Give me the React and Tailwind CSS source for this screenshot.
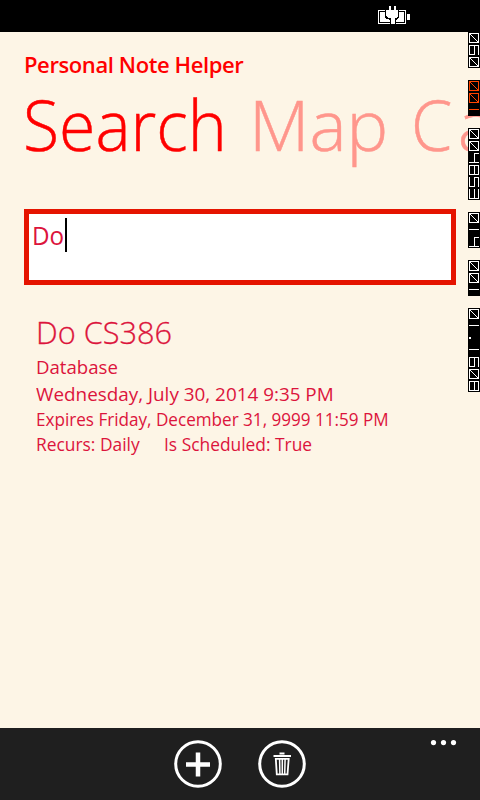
const OPEN = "font-['Open_Sans','Noto_Sans',sans-serif]";

// Seven segment strokes turned by a quarter, on a 12px cell
const GLYPHS = {
  0: "M1.5 1.5H10.5V10.5H1.5ZM2 2L10 10",
  1: "M1 5.5H11",
  3: "M1.5 1V10.5H10.5V1M6.5 1V10",
  4: "M1 10.5H11M6.5 10V1.5H11",
  5: "M1.5 1V10.5H6.5V1.5H10.5V11",
  8: "M1.5 1.5H10.5V10.5H1.5ZM6.5 2V10",
  9: "M10.5 11V1.5H1.5V10.5H6.5V2",
  ".": "M1 6H3",
};

function Counter({ text, color = "#fff" }) {
  return (
    <div className="flex flex-col bg-black">
      {text.split("").map((c, i) => (
        <svg key={i} width="12" height="12" viewBox="0 0 12 12" fill="none" stroke={color} strokeWidth={c === "." ? 2 : 1} shapeRendering="crispEdges">
          <path d={GLYPHS[c]} />
        </svg>
      ))}
    </div>
  );
}

export default function App() {
  return (
    <div className={"relative flex h-[800px] w-[480px] flex-col overflow-hidden bg-[#fdf5e6] text-[#dc143c] " + OPEN}>
      <div className="h-8 shrink-0 bg-black pl-[378px] pt-[6px]">
        <svg width="33" height="19" viewBox="0 0 33 19" shapeRendering="crispEdges">
          <path d="M0 4H28V18H0Z" fill="#fff" />
          <path d="M1 5H27V17H1Z" fill="#000" />
          <path d="M2 6H26V16H2Z" fill="#fff" />
          <path d="M29 8H32V14H29Z" fill="#fff" />
          <path d="M7 3H21V12L18 14V18H12V14L7 12Z" fill="#000" />
          <path d="M11 0H13V4H16V0H18V4H20V10L18 12H17V18H13V12H11L8 10V4H11Z" fill="#fff" />
        </svg>
      </div>
      <header className="h-[177px] shrink-0 overflow-hidden pl-6 text-[#ff0000]">
        <h1 className="mt-[17px] h-[30px] whitespace-nowrap text-[22px] font-semibold leading-[30px] tracking-[-0.4px]">Personal Note Helper</h1>
        <nav className="flex text-[70px] font-light leading-[90px] whitespace-nowrap [-webkit-text-stroke:0.5px_currentColor]">
          <span className="w-[225px] shrink-0 origin-left scale-x-[0.945] -translate-x-[1px]">Search</span>
          <span className="w-[162px] shrink-0 text-[#ff968c]">Map</span>
          <span className="shrink-0 origin-left scale-x-[0.95] tracking-[6px] text-[#ff968c]">Ca</span>
        </nav>
      </header>
      <div className="mx-6 flex h-[76px] shrink-0 border-[5px] border-[#e51400] bg-white pl-[3px] pt-1">
        <span className="w-[33px] origin-left scale-x-[0.97] text-[25px] leading-[35px]">Do</span>
        <span className="h-[34px] w-[2px] bg-black" />
      </div>
      <main className="flex-1 whitespace-nowrap pl-9 pt-[25px] text-[19px] leading-[26px]">
        <h2 className="h-[44px] origin-left scale-x-[0.96] text-[32px] font-light leading-[43px] [-webkit-text-stroke:0.3px_currentColor]">Do CS386</h2>
        <p className="h-[27px] origin-left scale-x-[0.98]">Database</p>
        <p className="origin-left scale-x-[0.993]">Wednesday, July 30, 2014 9:35 PM</p>
        <p className="origin-left scale-x-[0.95] text-[18px] leading-[25px]">Expires Friday, December 31, 9999 11:59 PM</p>
        <p className="flex text-[18px] leading-[25px]">
          <span className="w-[128px] origin-left scale-x-[0.965]">Recurs: Daily</span>
          <span className="origin-left scale-x-[0.965]">Is Scheduled: True</span>
        </p>
      </main>
      <footer className="relative flex h-[72px] shrink-0 gap-9 bg-[#1f1f1f] pl-[174px] pt-3">
        <svg width="48" height="48" viewBox="0 0 48 48" fill="none" stroke="#fff">
          <circle cx="24" cy="24" r="22.3" strokeWidth="3" />
          <path d="M12 24.5H36M24 12.5V36.5" strokeWidth="4.5" />
        </svg>
        <svg width="48" height="48" viewBox="0 0 48 48" fill="none" stroke="#fff">
          <circle cx="24" cy="24" r="22.3" strokeWidth="3" />
          <path d="M15.5 16H33M21.5 13.6H26.5" strokeWidth="2" />
          <path d="M17.8 18.8L18.8 34.3H29.5L30.7 18.8Z" strokeWidth="1.8" />
          <path d="M21.6 19L21.9 34M24.3 19V34M27.1 19L26.7 34" strokeWidth="1.5" />
        </svg>
        <svg className="absolute left-[430px] top-3" width="28" height="6" fill="#fff">
          <circle cx="3.5" cy="2.6" r="2.6" />
          <circle cx="13.5" cy="2.6" r="2.6" />
          <circle cx="23.5" cy="2.6" r="2.6" />
        </svg>
      </footer>
      <aside className="absolute right-0 top-8 flex w-3 flex-col gap-3">
        <Counter text="090" />
        <Counter text="001" color="#ff4500" />
        <Counter text="004853" />
        <Counter text="014" />
        <Counter text="001" />
        <Counter text="01.1908" />
      </aside>
    </div>
  );
}
